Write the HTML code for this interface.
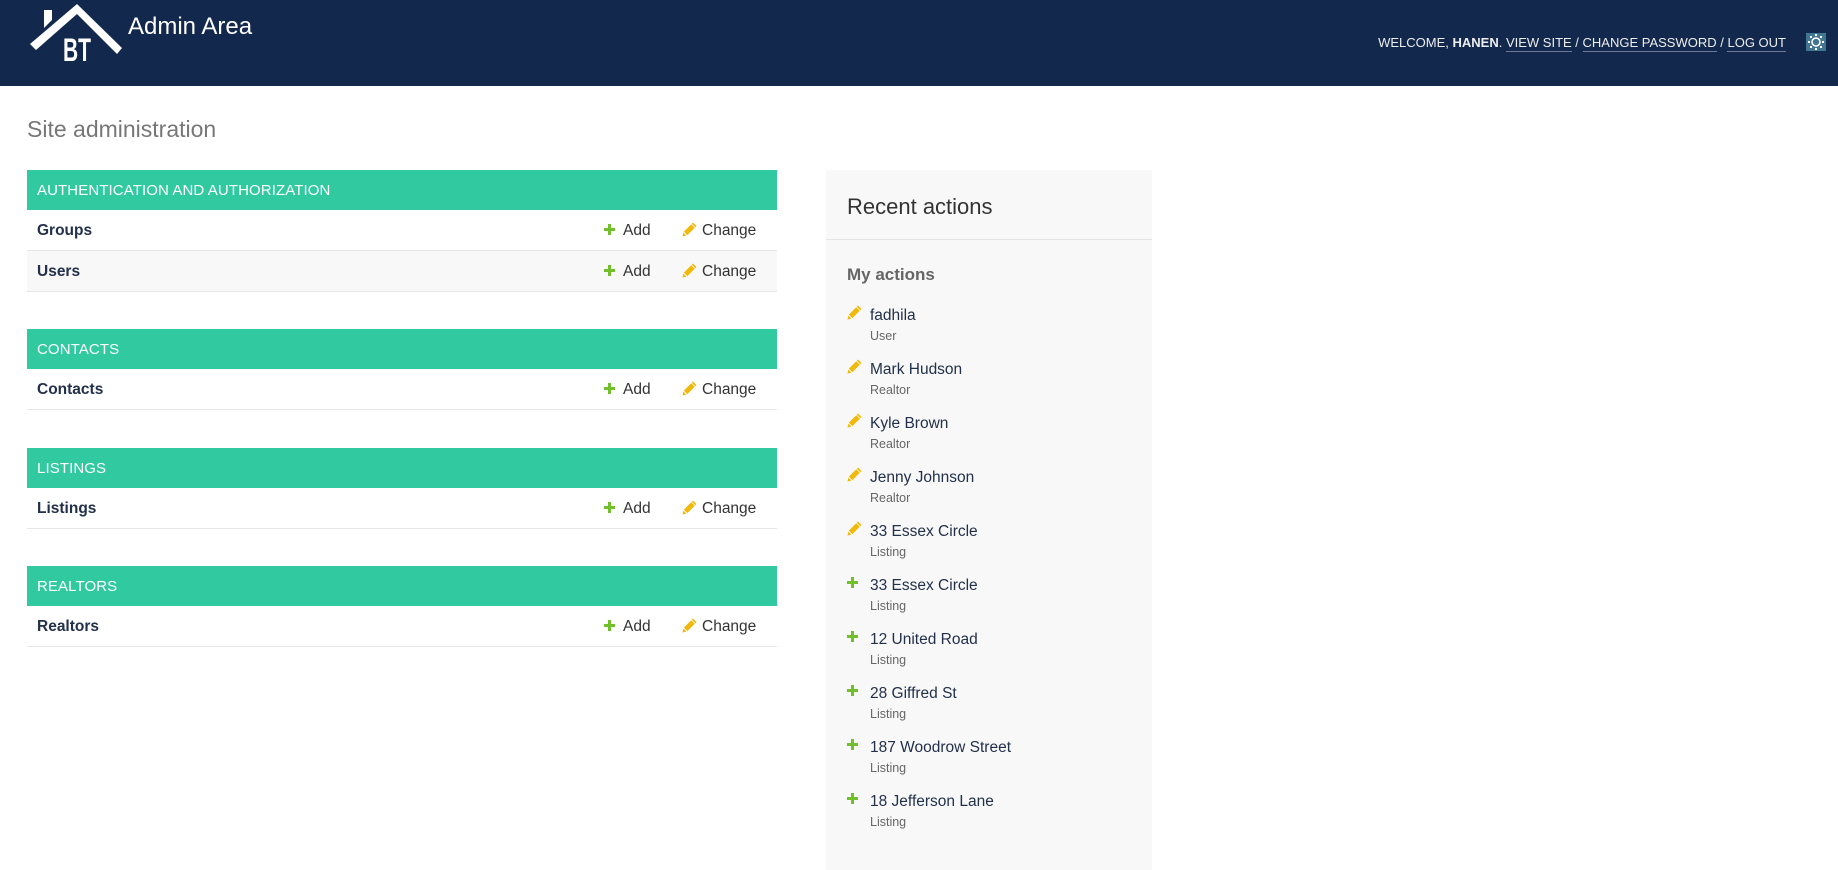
<!DOCTYPE html>
<html><head><meta charset="utf-8"><style>
*{box-sizing:border-box;margin:0;padding:0}
body{width:1838px;height:836px;overflow:hidden;background:#fff;font-family:"Liberation Sans",sans-serif;color:#333;position:relative}
#hdr{position:absolute;left:0;top:0;width:1838px;height:86px;background:#12284c}
#brand{position:absolute;left:128px;top:13px;font-size:24px;color:#fff}
#tools{position:absolute;right:52px;top:35px;font-size:13px;color:#eee;letter-spacing:0;white-space:nowrap}
#tools a{color:#eee;text-decoration:none;border-bottom:1px solid #6c7a93;padding-bottom:1px}
#theme{position:absolute;left:1806px;top:33px;width:20px;height:18px;background:#417690}
h1{position:absolute;left:27px;top:116px;font-size:23px;font-weight:normal;color:#777}
.mod{position:absolute;left:27px;width:750px}
.cap{height:40px;background:#30c9a0;color:#fff;font-size:15px;padding:12px 0 0 10px;letter-spacing:.1px}
.row{height:41px;border-bottom:1px solid #e6e6e6;position:relative;font-size:15.5px;line-height:18px}
.row.alt{background:#f8f8f8}
.row .n{position:absolute;left:10px;top:12px;font-weight:bold;color:#22304a}
.row .a{position:absolute;left:596px;top:12px;color:#333}
.row .c{position:absolute;left:675px;top:12px;color:#333}
.plus{position:absolute;width:11px;height:11px}
.plus:before{content:"";position:absolute;left:4px;top:0;width:3px;height:11px;background:#70bf2b}
.plus:after{content:"";position:absolute;left:0;top:4px;width:11px;height:3px;background:#70bf2b}
.row .plus{left:-19px;top:2px}
.row .pen{position:absolute;left:-20px;top:0}
#ra{position:absolute;left:826px;top:170px;width:326px;height:700px;background:#f8f8f8}
#ra h2{position:absolute;left:21px;top:24px;font-size:22px;font-weight:normal;color:#333}
#ra .sep{position:absolute;left:0;top:69px;width:326px;height:1px;background:#e4e4e4}
#ra h3{position:absolute;left:21px;top:95px;font-size:17px;font-weight:bold;color:#666}
.it{position:absolute;left:21px;font-size:15.5px;color:#22304a}
.it .ic{position:absolute;left:0;top:0}
.it .t{position:absolute;left:23px;top:2px;white-space:nowrap}
.it .s{position:absolute;left:23px;top:24px;font-size:12.5px;color:#666}
</style></head><body>
<div id="hdr">
<svg style="position:absolute;left:30px;top:4px" width="94" height="58" viewBox="0 0 94 58">
<polygon points="0,40 47,0 92,44 87,50 47,10 6,46" fill="#fff"/>
<polygon points="14,6 22,6 22,16 14,24" fill="#fff"/>
<text x="33" y="57" font-family="Liberation Sans" font-weight="bold" font-size="32" fill="#fff" textLength="28" lengthAdjust="spacingAndGlyphs">BT</text>
</svg>
<div id="brand">Admin Area</div>
<div id="tools">WELCOME, <b>HANEN</b>. <a>VIEW SITE</a> / <a>CHANGE PASSWORD</a> / <a>LOG OUT</a></div>
<div id="theme"><svg width="20" height="18" viewBox="0 0 20 18"><circle cx="10" cy="9" r="4" fill="none" stroke="#fff" stroke-width="1.6"/><g fill="#fff"><rect x="9" y="1" width="2" height="2"/><rect x="9" y="15" width="2" height="2"/><rect x="2" y="8" width="2" height="2"/><rect x="16" y="8" width="2" height="2"/><rect x="4" y="3" width="2" height="2"/><rect x="14" y="3" width="2" height="2"/><rect x="4" y="13" width="2" height="2"/><rect x="14" y="13" width="2" height="2"/></g></svg></div>
</div>
<h1>Site administration</h1>

<svg width="0" height="0" style="position:absolute"><defs><symbol id="p" viewBox="0 0 15 15"><path d="M11 0.5 L14.5 4 L5 13.5 L0.5 14.5 L1.5 10 Z" fill="#efb80b"/><path d="M1.5 10 L5 13.5" stroke="#fff" stroke-width="1"/><path d="M9.5 2 L13 5.5" stroke="#fff" stroke-width="0.8"/></symbol></defs></svg>

<div class="mod" style="top:170px">
<div class="cap">AUTHENTICATION AND AUTHORIZATION</div>
<div class="row"><span class="n">Groups</span><span class="a"><i class="plus"></i>Add</span><span class="c"><svg class="pen" width="15" height="15"><use href="#p"/></svg>Change</span></div>
<div class="row alt"><span class="n">Users</span><span class="a"><i class="plus"></i>Add</span><span class="c"><svg class="pen" width="15" height="15"><use href="#p"/></svg>Change</span></div>
</div>
<div class="mod" style="top:329px">
<div class="cap">CONTACTS</div>
<div class="row"><span class="n">Contacts</span><span class="a"><i class="plus"></i>Add</span><span class="c"><svg class="pen" width="15" height="15"><use href="#p"/></svg>Change</span></div>
</div>
<div class="mod" style="top:448px">
<div class="cap">LISTINGS</div>
<div class="row"><span class="n">Listings</span><span class="a"><i class="plus"></i>Add</span><span class="c"><svg class="pen" width="15" height="15"><use href="#p"/></svg>Change</span></div>
</div>
<div class="mod" style="top:566px">
<div class="cap">REALTORS</div>
<div class="row"><span class="n">Realtors</span><span class="a"><i class="plus"></i>Add</span><span class="c"><svg class="pen" width="15" height="15"><use href="#p"/></svg>Change</span></div>
</div>

<div id="ra">
<h2>Recent actions</h2><div class="sep"></div>
<h3>My actions</h3>
<div class="it" style="top:135px"><svg class="ic" width="15" height="15"><use href="#p"/></svg><span class="t">fadhila</span><span class="s">User</span></div>
<div class="it" style="top:189px"><svg class="ic" width="15" height="15"><use href="#p"/></svg><span class="t">Mark Hudson</span><span class="s">Realtor</span></div>
<div class="it" style="top:243px"><svg class="ic" width="15" height="15"><use href="#p"/></svg><span class="t">Kyle Brown</span><span class="s">Realtor</span></div>
<div class="it" style="top:297px"><svg class="ic" width="15" height="15"><use href="#p"/></svg><span class="t">Jenny Johnson</span><span class="s">Realtor</span></div>
<div class="it" style="top:351px"><svg class="ic" width="15" height="15"><use href="#p"/></svg><span class="t">33 Essex Circle</span><span class="s">Listing</span></div>
<div class="it" style="top:405px"><i class="plus ic" style="top:2px"></i><span class="t">33 Essex Circle</span><span class="s">Listing</span></div>
<div class="it" style="top:459px"><i class="plus ic" style="top:2px"></i><span class="t">12 United Road</span><span class="s">Listing</span></div>
<div class="it" style="top:513px"><i class="plus ic" style="top:2px"></i><span class="t">28 Giffred St</span><span class="s">Listing</span></div>
<div class="it" style="top:567px"><i class="plus ic" style="top:2px"></i><span class="t">187 Woodrow Street</span><span class="s">Listing</span></div>
<div class="it" style="top:621px"><i class="plus ic" style="top:2px"></i><span class="t">18 Jefferson Lane</span><span class="s">Listing</span></div>
</div>
</body></html>
